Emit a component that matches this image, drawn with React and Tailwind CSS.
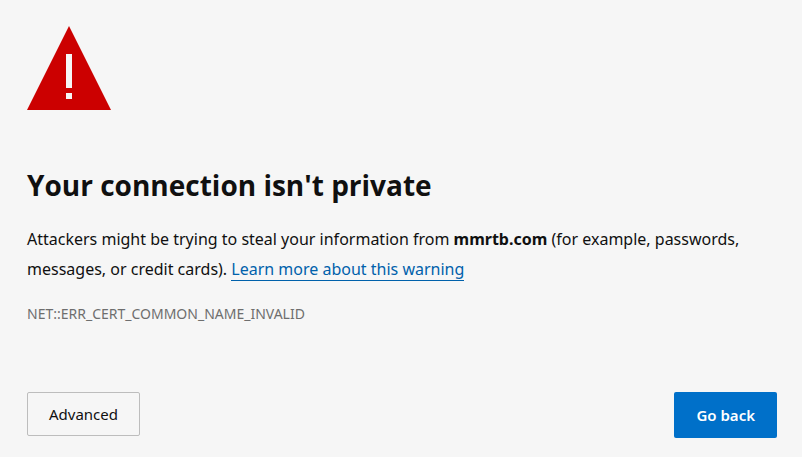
import { useState } from "react";

function WarningIcon() {
  return (
    <svg width="84" height="84" viewBox="0 0 84 84" role="img" aria-label="Warning">
      <path d="M42 0 L84 84 H0 Z" fill="#cc0000" />
      <rect x="39" y="28" width="6" height="34" fill="#f6f6f6" />
      <rect x="39" y="67" width="6" height="6" fill="#f6f6f6" />
    </svg>
  );
}

function App() {
  const [advanced, setAdvanced] = useState(false);

  return (
    <main className="min-h-screen bg-[#f6f6f6] pt-[26px] pr-[25px] pb-5 pl-[27px] font-['Noto_Sans',sans-serif] text-[#101010]">
      <WarningIcon />

      <h1 className="mt-14 font-['Open_Sans',sans-serif] text-[28px] leading-[38px] font-bold">
        Your connection isn't private
      </h1>

      <p className="mt-5 text-base leading-[30px]">
        Attackers might be trying to steal your information from <strong>mmrtb.com</strong> (for example, passwords,
        messages, or credit cards).{" "}
        <a href="#learn-more" className="border-b border-[#0061ab] text-[#0061ab]">
          Learn more about this warning
        </a>
      </p>

      <p className="mt-[18px] text-sm leading-6 text-[#6e6e6e]">NET::ERR_CERT_COMMON_NAME_INVALID</p>

      <div className="mt-[66px] flex items-start justify-between">
        <button
          type="button"
          aria-expanded={advanced}
          onClick={() => setAdvanced(!advanced)}
          className="h-11 rounded-xs border border-[#bdbdbd] px-[21px] text-[15px]"
        >
          Advanced
        </button>
        <button
          type="button"
          onClick={() => window.history.back()}
          className="h-[46px] rounded-xs bg-[#0070c9] px-[22px] text-[15px] font-semibold text-white"
        >
          Go back
        </button>
      </div>
    </main>
  );
}

export default App;
